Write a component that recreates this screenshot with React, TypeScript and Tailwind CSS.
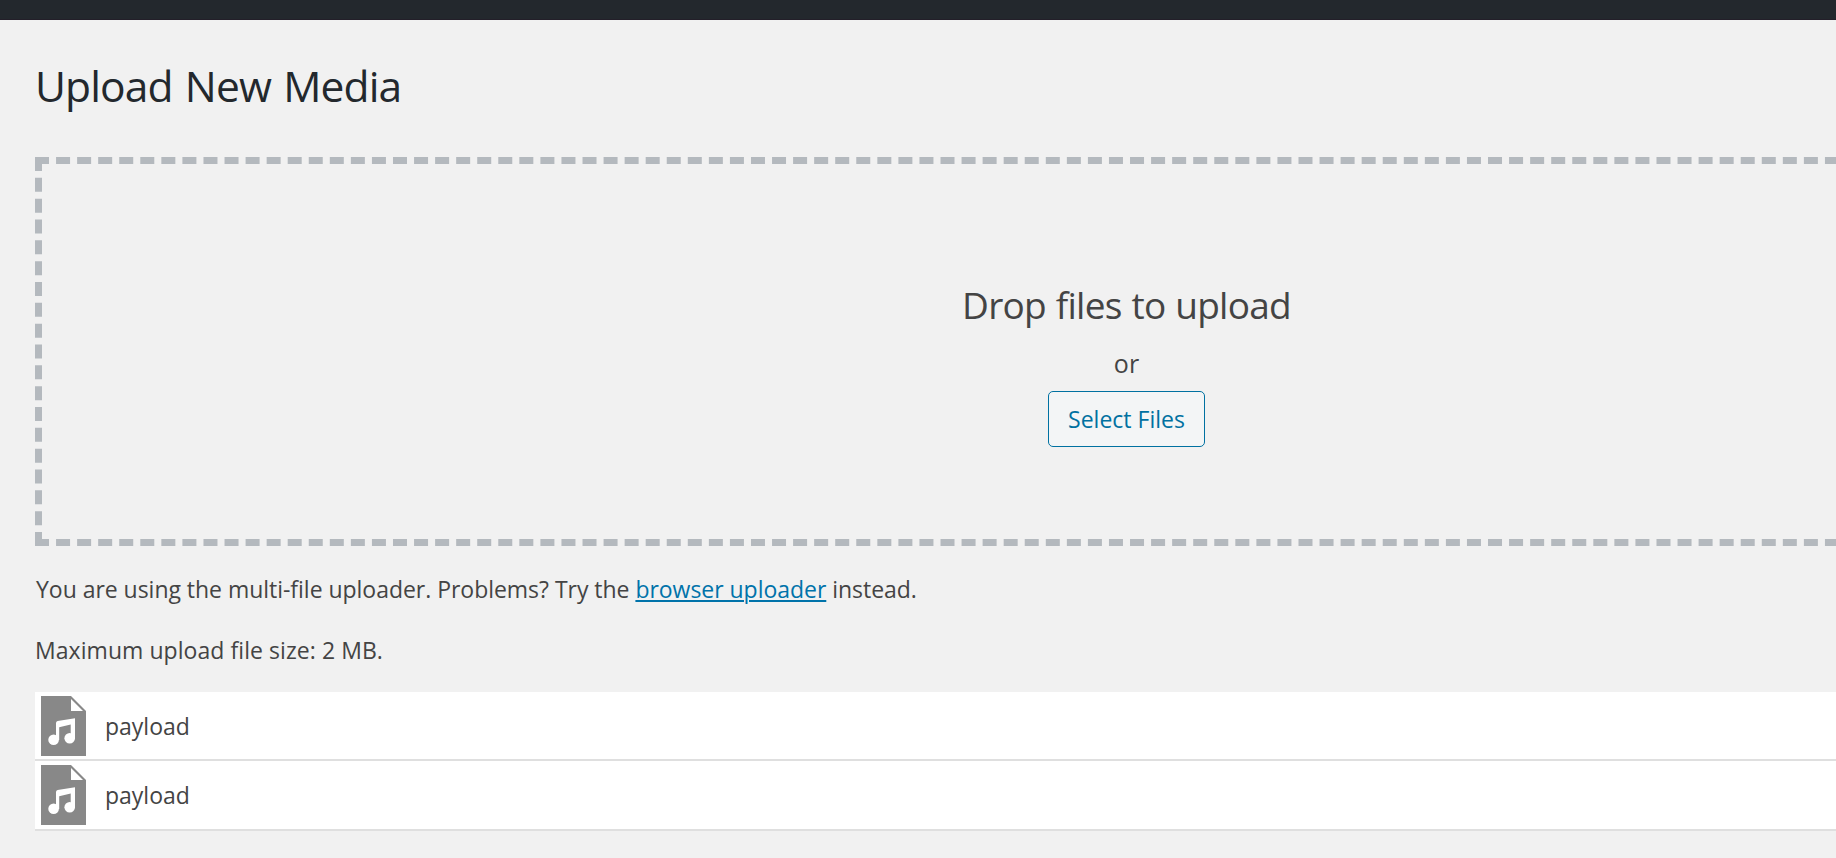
import React from "react";

const files = [
    {
        id:1 ,
        name:"payload",
    },
    {
        id:2 ,
        name:"payload",
    },
]

const AudioIcon = () => (
    <svg width="45" height="60" viewBox="0 0 45 60" className="block shrink-0">
        <path d="M0 0H30L45 15V60H0Z" fill="#888888" />
        <path d="M30 3V15H42Z" fill="#ffffff" />
        <path d="M15 27Q15 25.3 16.6 25L34 22.3V42.5H29.7V28.6L18.2 31.2V44H15Z" fill="#ffffff" />
        <circle cx="12.6" cy="43.8" r="5.3" fill="#ffffff" />
        <circle cx="28.7" cy="42.2" r="5.3" fill="#ffffff" />
    </svg>
)

const App = () => {
    return (
        <div className="w-full h-[858px] overflow-hidden bg-[#f1f1f1] text-[#444444] font-['Open_Sans','Noto_Sans',sans-serif]">
            <div className="h-5 bg-[#23282d] border-b border-[#231f29]"></div>

            <div className="pl-[35px] w-[2218px]">
                <h1 className="pt-9 h-[137px] text-[42.5px] leading-[60px] text-[#23282d] whitespace-nowrap tracking-[-0.87px] [word-spacing:2px]">Upload New Media</h1>

                <div className="h-[389px] border-[7px] border-dashed border-[#b4b9be] flex flex-col items-center pt-[114px]">
                    <p className="text-[37px] leading-[54px] tracking-[-0.75px] [word-spacing:1px]">Drop files to upload</p>
                    <p className="text-[25px] leading-9 pt-[13px]">or</p>
                    <button className="mt-2.5 w-[157px] h-14 rounded-[5px] border border-[#0071a1] bg-[#f3f5f6] text-[#0071a1] text-[23px] leading-8 whitespace-nowrap">Select Files</button>
                </div>

                <p className="mt-[25px] pl-px text-[23px] leading-9 whitespace-nowrap tracking-[-0.03px]">
                    You are using the multi-file uploader. Problems? Try the <a href="#" className="text-[#0073aa] underline decoration-2 underline-offset-2">browser uploader</a> instead.
                </p>
                <p className="mt-[25px] text-[23px] leading-9 whitespace-nowrap tracking-[0.06px]">Maximum upload file size: 2 MB.</p>

                <div className="mt-6">
                    {
                        files?.map((item) => (
                            <div key={item.id} className="flex items-start gap-[19px] h-[69px] last:h-[70px] pl-1.5 pt-1 bg-white border-b-2 border-[#dfdfdf]">
                                <AudioIcon />
                                <span className="text-[23px] leading-9 pt-3">{item?.name}</span>
                            </div>
                        ))
                    }
                </div>
            </div>
        </div>
    );
};

export default App;
